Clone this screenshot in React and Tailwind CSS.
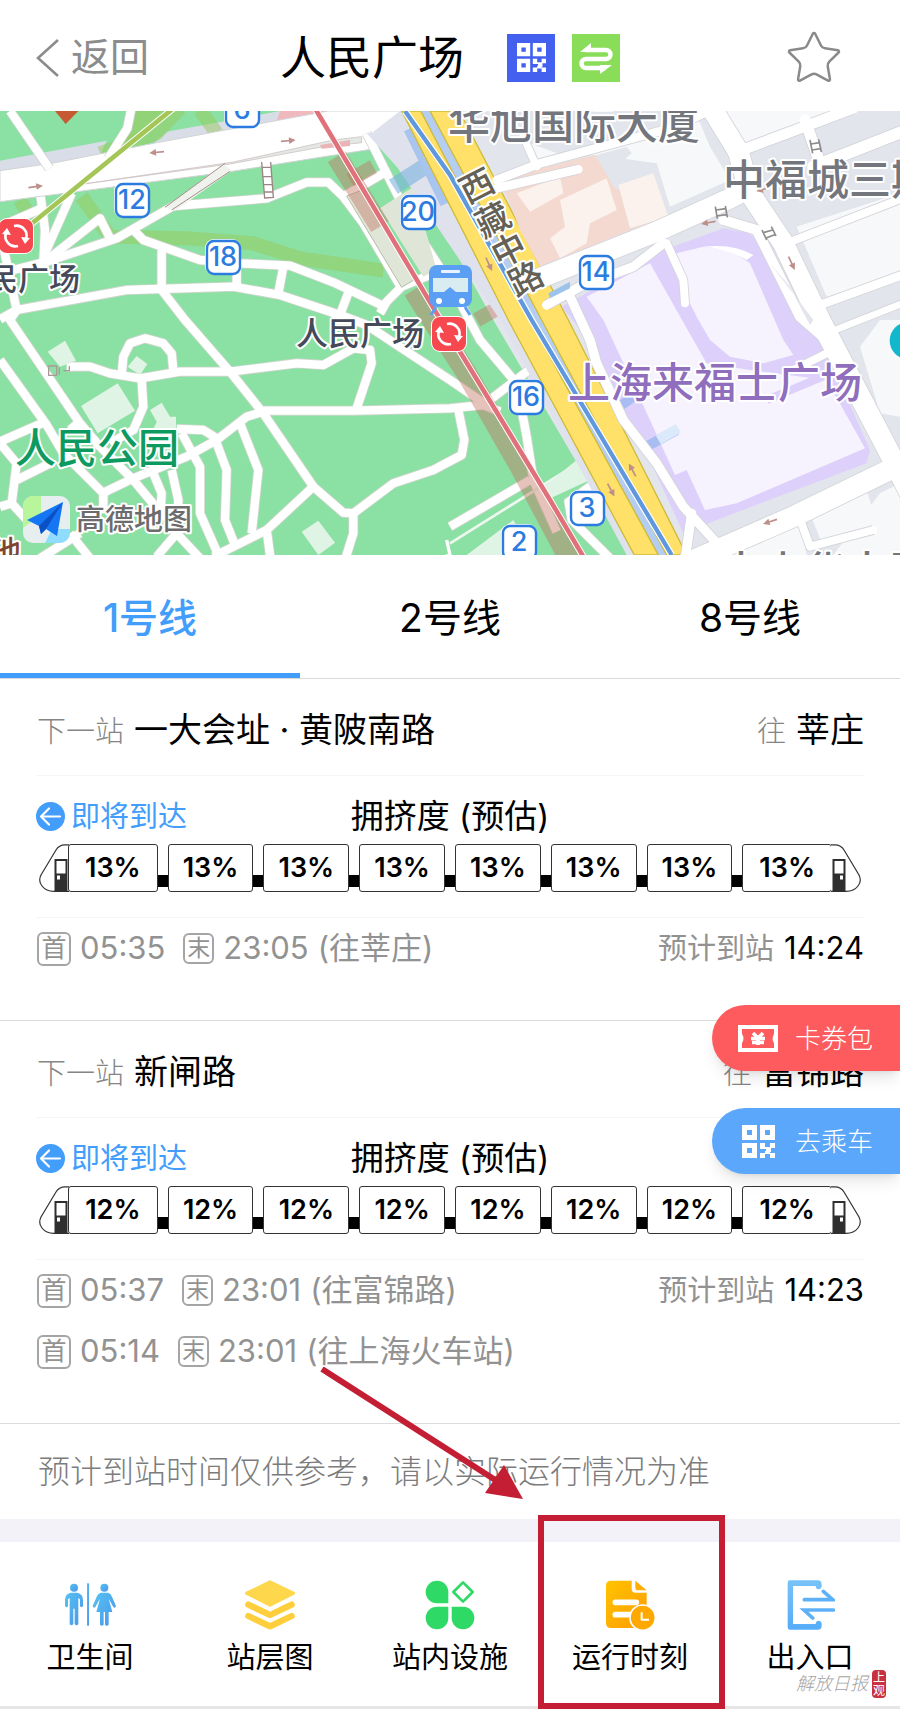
import React from "react";
import { Star } from "lucide-react";

const UI_FONT = "font-['Inter','Noto_Sans_CJK_SC',sans-serif]";

/* ---------- Map ---------- */

const PATHS = [
  "30,333 148,505",
  "395,320 382,385 325,475",
  "122,590 135,690 130,790",
  "215,580 135,760",
  "0,680 125,625",
  "130,795 160,765 300,655 335,725",
  "40,810 140,785 350,715 520,618 800,595 920,547 985,547 1030,590 1090,670 1205,865",
  "400,690 430,720 600,780 720,790 870,797 1000,847 1150,918",
  "485,750 485,870",
  "710,795 710,860",
  "850,800 835,880",
  "1050,865 1020,945",
  "0,958 50,930 380,870 700,860 840,885 1020,945 1100,975 1350,1140 1460,1215",
  "485,870 555,960 690,1115 790,1240 940,1460 1030,1538 1060,1540",
  "10,740 50,930 30,960 240,1270 300,1340 400,1440 475,1530",
  "0,1080 140,1275 190,1360 310,1480 310,1540",
  "200,1100 270,1100 330,1120 420,1135 540,1115 690,1115 890,1090 970,1095 1060,1045 1110,1050 1115,1090 1070,1225",
  "365,1125 370,1070 390,1030 435,1015 490,1030 515,1060 520,1110",
  "425,1140 430,1220 400,1290 330,1330",
  "790,1232 1060,1232 1350,1225 1450,1215 1500,1235",
  "790,1235 740,1250 650,1320 560,1370 400,1435 310,1478",
  "530,1287 610,1290 650,1315",
  "545,1300 600,1400 600,1540 655,1665",
  "650,1330 680,1410 675,1560 705,1635",
  "720,1270 775,1410 755,1600",
  "640,1670 800,1590 940,1460",
  "800,1590 812,1680",
  "515,1410 535,1500 530,1600 470,1670",
  "530,1600 600,1675",
  "460,1420 485,1480 480,1560",
  "1060,1540 1060,1600 1035,1680",
  "1060,1540 1180,1450 1300,1410 1385,1365 1393,1320 1375,1230",
  "0,1325 125,1270",
  "0,1330 50,1390 35,1510 0,1520",
  "50,1440 160,1385",
  "35,1510 90,1570",
  "210,1600 270,1675",
  "120,1675 240,1600",
  "210,1290 245,1260",
  "1100,400 1180,560 1240,680 1350,850 1440,1020 1550,1150 1580,1310 1600,1440 1670,1595",
  "1030,590 1150,520",
  "1140,940 1160,905 1205,860 1290,825",
  "1450,1215 1600,1100",
  "1350,1580 1590,1440",
  "1285,640 1370,600",
  "1700,1510 1790,1445",
  "1705,1500 1715,1560 1830,1675",
];

const EAST_ROADS = [
  [60, "1580,850 1970,695 2190,595 2260,560"],
  [62, "2120,300 2215,455 2250,580 2350,730 2460,960 2690,1400 2740,1500"],
  [32, "2200,460 2560,325"],
  [36, "2440,500 2720,390"],
  [24, "2360,730 2720,590"],
  [26, "2460,915 2720,820"],
  [20, "2480,1000 2720,905"],
  [34, "2415,360 2460,490"],
  [26, "1490,540 1620,490 2030,380 2110,340"],
  [22, "1570,410 1610,500"],
  [26, "1490,565 1735,508"],
  [28, "1640,915 1740,860 1900,800 1990,730"],
  [24, "2000,730 2050,840 2055,910"],
  [28, "1710,890 1770,1020 1790,1090 1870,1260 1970,1390 2050,1520 2160,1640"],
  [28, "2075,1540 2055,1680"],
  [62, "2060,1690 2380,1550 2740,1375"],
  [24, "2390,1530 2430,1640 2620,1590"],
  [30, "2480,1020 2400,950 2270,690 2170,660"],
  [24, "2500,1050 2380,1110"],
];

const ONE_WAY = [
  [470, 457, 175],
  [865, 422, -5],
  [107, 560, -8],
  [1467, 793, 65],
  [2125, 668, 170],
  [2290, 568, 165],
  [2375, 790, 65],
  [1833, 1470, 62],
  [1897, 1410, -118],
  [2310, 1565, 162],
];

const BADGES = [
  ["6", 242, 110],
  ["12", 132, 200],
  ["18", 223, 257],
  ["20", 418, 212],
  ["14", 596, 272],
  ["16", 526, 397],
  ["3", 587, 508],
  ["2", 519, 542],
];

const STREET = [
  ["西", 477, 186],
  ["藏", 493, 220],
  ["中", 509, 250],
  ["路", 526, 279],
];

function MetroMark({ x, y, r = 17 }) {
  return (
    <g transform={`translate(${x} ${y})`}>
      <rect x={-r - 1} y={-r - 1} width={2 * r + 2} height={2 * r + 2} rx="9" fill="#fff" />
      <rect x={-r} y={-r} width={2 * r} height={2 * r} rx="8" fill="#f8484f" />
      <g fill="none" stroke="#fff" strokeWidth="2.6">
        <path d="M-2 -10 A10 10 0 0 1 10 3" />
        <path d="M2 10 A10 10 0 0 1 -10 -3" />
      </g>
      <path d="M5 1 L14 2 L9 8 Z M-5 -1 L-14 -2 L-9 -8 Z" fill="#fff" />
    </g>
  );
}

function StationMap() {
  return (
    <svg viewBox="0 333 2700 1332" className="block w-full" role="img" aria-label="人民广场地图">
      <rect y="333" width="2700" height="1332" fill="#e3e5ec" />
      {/* park */}
      <path d="M0 333H1100L1215 460L1330 690L1480 960L1720 1370L1890 1665H0Z" fill="#8be0a3" />
      <path d="M1100 405L1190 425Q1225 440 1240 500L1390 740L1350 900Z" fill="#8be0a3" />
      <g fill="#d9dde7">
        <path d="M0 482L320 422L300 465L0 520Z" />
        <path d="M500 395L840 333H1010L640 410L450 440Z" />
      </g>
      <path d="M840 333H985L830 362Z" fill="#efb9bd" />
      <g fill="none" stroke="#98c95c" strokeOpacity=".5" strokeWidth="42">
        <path d="M60 600L90 650M245 590L330 710L560 715L760 730L900 775L1150 812" />
        <path d="M300 460L470 400L540 325M600 330L650 400" />
      </g>
      <path d="M400 333H520L300 520L330 460Z" fill="#98c95c" fillOpacity=".6" />
      <path d="M0 512L155 490L460 430L985 333H1220L1235 383L1105 407L1112 448L690 515L0 605Z" fill="#fff" stroke="#d2d3d6" strokeWidth="3" />
      <path d="M230 555L700 486L1000 420L1085 410V428L960 442L690 492Z" fill="#e4e8e4" stroke="#c9b8bb" strokeWidth="2" />
      <path d="M960 435L1050 420V438L965 446Z" fill="#eab4b6" />
      <path d="M165 333H235L197 372Z" fill="#c65a33" />

      {/* park paths */}
      <g fill="none" strokeLinejoin="round">
        {PATHS.map((p) => (
          <polyline key={p} points={p} stroke="#cfd6cd" strokeWidth="30" />
        ))}
        {PATHS.map((p) => (
          <polyline key={p} points={p} stroke="#fff" strokeWidth="25" />
        ))}
        <path d="M1350 1630L1750 1380" stroke="#eef7ef" strokeWidth="8" />
        <path d="M1340 1620L1350 1665L1300 1680" stroke="#fff" strokeWidth="10" />
      </g>
      <path d="M495 622L670 492L695 512L525 632Z" fill="#f0f2ee" />
      <path d="M495 622L675 490M515 630L690 514" stroke="#a88f8c" strokeWidth="3" />
      <g stroke="#9d8585" strokeWidth="4" fill="#fff">
        <path d="M785 486L794 594L820 592L812 486M788 502H812M790 530H814M792 554H816M794 576H818" />
      </g>
      <g fill="#dff4e4">
        <path d="M143 1055L195 1022L228 1082L180 1100Z" />
        <path d="M243 1218L353 1150L405 1232L293 1300Z" />
        <path d="M383 1100L410 1068L442 1092L420 1125Z" />
        <path d="M450 1230L485 1208L510 1250H528V1285L460 1288L470 1265Z" />
        <path d="M905 1595L955 1562L1005 1628L955 1665Z" />
        <path d="M1620 1470L1730 1380L1770 1440L1640 1500Z" />
        <path d="M1400 1665L1540 1560L1600 1665Z" />
      </g>
      <path d="M142 1098H170V1126H146V1102M178 1102V1124M190 1112H208V1098" fill="none" stroke="#a99" strokeWidth="4" />
      <path d="M1040 588L1082 572L1245 838L1205 862Z" fill="#dfe6d8" stroke="#b9bba7" strokeWidth="3" />
      <path d="M1140 625L1240 560L1310 810L1270 830Z" fill="#dfe6d8" />

      {/* passage under the metro line */}
      <g fill="none" stroke="#c0705c" strokeOpacity=".42">
        <path d="M1010 470L1140 680M1240 870L1290 950L1400 1120L1560 1400L1720 1700" strokeWidth="62" />
        <path d="M1050 540L1120 500M1430 960L1520 910" strokeWidth="44" />
      </g>

      {/* avenue */}
      <path d="M1120 395L1200 333H1290L1390 480L1720 1090L2060 1665H1880L1500 960Z" fill="#dfe2ec" />
      <path d="M1230 333H1330L1640 960L2020 1665H1960L1570 960Z" fill="#b5cdf0" />
      <path d="M1180 560L1290 490" stroke="#7cb3e0" strokeOpacity=".6" strokeWidth="50" />
      <path d="M1190 500L1100 400L1240 380L1260 470Z" fill="#dfe2ec" />
      <path d="M1230 385L1340 610" stroke="#a9c4ef" strokeWidth="40" />
      <g fill="#ffe068" stroke="#cdbb3a" strokeWidth="4">
        <path d="M1205 333H1262L1590 960L1975 1665H1903L1525 960Z" />
        <path d="M1290 333H1378L1705 960L2060 1665H2000L1625 960Z" />
      </g>
      <path d="M1215 333L1350 525L1595 960L2015 1665" fill="none" stroke="#fff" strokeWidth="20" />
      <path d="M1215 333L1350 525L1595 960L2015 1665" fill="none" stroke="#6098dd" strokeWidth="13" />

      {/* east blocks */}
      <g fill="#f7f8fa">
        <path d="M1590 430L1620 490L1690 465L2090 345L2130 440L2190 540L2010 620L1970 490L1860 530L1850 500L1895 460L1880 440L1790 465L1700 470Z" />
        <path d="M2160 333H2500L2225 433Z" />
        <path d="M2390 680L2700 580V820L2480 890Z" />
        <path d="M2580 1040L2640 960H2700V1250L2640 1240Z" />
        <path d="M2140 1665L2400 1560L2420 1665ZM2430 1540L2600 1470L2640 1600L2470 1640ZM2640 1480L2700 1450V1665H2500Z" />
      </g>
      <path d="M1500 535L1785 465L1830 540L2000 650L1890 690L1620 800L1560 690Z" fill="#f3d9cf" />
      <path d="M1790 465L1970 490L2005 650L1840 560Z" fill="#e3e5ec" />
      <g fill="#fbf1ed">
        <path d="M1550 580L1680 530L1690 580L1590 635Z" />
        <path d="M1680 600L1820 535L1850 630L1770 670L1760 730L1680 775L1650 715L1695 680Z" />
        <path d="M1855 555L1960 520L2005 650L1890 685Z" />
      </g>
      <path d="M1685 920L1990 750L2170 685L2250 700L2290 750L2410 950L2480 1055L2610 1350L2600 1390L2150 1560L2050 1600L1940 1360L1790 1110L1750 1000Z" fill="#ddd1fb" />
      <g fill="#f6f3fe">
        <path d="M1760 890L1950 790L2080 1020L2120 1090L2250 1110L2480 1140L2595 1345L2210 1510L2115 1530L2060 1410L2025 1425L1950 1260L1810 960Z" />
        <path d="M2030 760L2110 740L2190 750L2250 790L2350 1020L2380 1065L2290 1090L2190 1070L2130 1020L2090 950L2050 870Z" />
      </g>
      <path d="M2110 740Q2200 730 2260 765L2240 780Q2180 745 2110 740Z" fill="#fff" />
      <path d="M1865 1215L1900 1190M1930 1345L2030 1290" stroke="#a9bdf2" strokeWidth="30" />
      <path d="M1975 1320L2035 1285" stroke="#dbeafb" strokeWidth="30" />
      <path d="M2300 1200L2480 1125" stroke="#ddd1fb" strokeWidth="24" />
      <g fill="none" strokeLinejoin="round">
        {EAST_ROADS.map(([w, p]) => (
          <polyline key={p} points={p} stroke="#d3d4da" strokeWidth={w + 5} />
        ))}
        {EAST_ROADS.map(([w, p]) => (
          <polyline key={p} points={p} stroke="#fff" strokeWidth={w} strokeLinecap="round" />
        ))}
      </g>
      <path d="M2310 790L2440 960L2430 975L2370 860Z" fill="#e3e5ec" />
      <path d="M1645 880L1710 845V865L1650 895Z" fill="#9dc3ea" />
      <g fill="none" stroke="#8f8b8b" strokeWidth="5">
        <path d="M2430 420L2438 460M2456 418L2464 456M2433 432L2458 428M2436 450L2462 446" />
        <path d="M2146 620L2152 656M2176 618L2182 652M2148 630L2178 626M2150 648L2180 644" />
        <path d="M2286 690L2300 720M2314 680L2328 708M2290 698L2318 690M2298 714L2324 704" />
      </g>
      <g fill="none" stroke="#bd8f8b" strokeWidth="5">
        {ONE_WAY.map(([x, y, a]) => (
          <g key={`${x}-${y}`} transform={`translate(${x} ${y}) rotate(${a})`}>
            <path d="M-22 0H6" />
            <path d="M2 -10L22 0L2 10Z" fill="#bd8f8b" stroke="none" />
          </g>
        ))}
      </g>

      {/* metro lines */}
      <g fill="none">
        <path d="M520 325L90 675" stroke="#fff" strokeWidth="20" />
        <path d="M520 325L90 675" stroke="#a3c657" strokeWidth="14" />
        <path d="M945 325L1310 940L1380 1055L1650 1500L1750 1670" stroke="#fff" strokeWidth="20" />
        <path d="M945 325L1310 940L1380 1055L1650 1500L1750 1670" stroke="#e0717a" strokeWidth="14" />
      </g>
      <circle cx="2725" cy="1022" r="56" fill="#10b7cd" />

      {/* labels, in page units */}
      <g transform="scale(3)" fontFamily="Inter, 'Noto Sans CJK SC', sans-serif">
        <g>
          <rect x="429" y="265" width="43" height="42" rx="8" fill="#5b9ff5" />
          <path d="M436 307l-5 8M465 307l5 8" stroke="#5b9ff5" strokeWidth="3" />
          <rect x="441" y="270" width="19" height="3" rx="1" fill="#e9f3fd" />
          <path d="M433 278H468V292H456L450 287L444 292H433Z" fill="#d9ecf2" />
          <circle cx="439" cy="301" r="3" fill="#fff" />
          <circle cx="462" cy="301" r="3" fill="#fff" />
        </g>
        <MetroMark x={449} y={334} />
        <MetroMark x={16} y={236} />
        {BADGES.map(([n, x, y]) => (
          <g key={n}>
            <rect x={x - 18} y={y - 18} width="36" height="36" rx="9" fill="#fff" />
            <rect x={x - 16} y={y - 16} width="33" height="33" rx="7" fill="#fff" stroke="#2c7be0" strokeWidth="2.4" />
            <text x={x} y={y + 9} fontSize="27" fontWeight="500" fill="#2c7be0" textAnchor="middle">{n}</text>
          </g>
        ))}
        <g stroke="#fff" strokeWidth="4" strokeLinejoin="round" paintOrder="stroke" fontWeight="500">
          <text x="296" y="345" fontSize="32" fill="#444a5a">人民广场</text>
          <text x="80" y="290" fontSize="31" fill="#444a5a" textAnchor="end">人民广场</text>
          <g fontSize="42" fill="#74767d">
            <text x="448" y="139">华旭国际大厦</text>
            <text x="723" y="195">中福城三期</text>
            <text x="720" y="587">大中华大厦</text>
          </g>
          <text x="568" y="398" fontSize="42" fill="#8f6fbd">上海来福士广场</text>
          <text x="15" y="463" fontSize="41" fill="#0c9a61">人民公园</text>
          <text x="21" y="562" fontSize="30" fill="#7d4632" textAnchor="end">池</text>
          <text x="76" y="530" fontSize="29" fill="#6c6c6c">高德地图</text>
          {STREET.map(([c, x, y]) => (
            <text key={c} transform={`translate(${x} ${y}) rotate(-27)`} y="12" fontSize="34" fill="#646055" textAnchor="middle">{c}</text>
          ))}
        </g>
        <clipPath id="logo"><rect x="23" y="496" width="47" height="47" rx="10" /></clipPath>
        <g clipPath="url(#logo)">
          <rect x="23" y="496" width="47" height="47" fill="#e6eef0" />
          <path d="M23 496H41V515L23 528Z" fill="#b9f59a" />
          <path d="M45 543L52 529H70V543Z" fill="#8fdcff" />
        </g>
        <path d="M63 502L27 520L39 526L41 534L46 529L57 536Z" fill="#1476f2" />
        <path d="M63 502L39 526L41 534L46 529Z" fill="#0b50c4" />
      </g>
    </svg>
  );
}

/* ---------- Icons ---------- */

function QrIcon({ className }) {
  return (
    <svg viewBox="0 0 33 33" className={className} fill="currentColor" aria-hidden="true">
      <path fillRule="evenodd" d="M0 0h15v15H0zM5 5v5h5V5zM18 0h15v15H18zM23 5v5h5V5zM0 18h15v15H0zM5 23v5h5v-5z" />
      <path d="M18 18h5v4h5v-4h5v5h-4v4h-5v-3h-6zM18 28h5v5h-5zM23 26h5v3h-5zM28 28h5v5h-5z" />
    </svg>
  );
}

function SwapIcon() {
  return (
    <svg viewBox="0 0 48 48" className="size-12" aria-hidden="true">
      <g fill="none" stroke="#fff" strokeWidth="4.5" strokeLinejoin="round">
        <path d="M14 16H34a4.500 4.500 0 0 1 0 9H14a4.500 4.500 0 0 0 0 9H34" />
      </g>
      <path d="M8 18L19 9V18ZM40 31L28 40V31Z" fill="#fff" />
    </svg>
  );
}

function TicketIcon() {
  return (
    <svg viewBox="0 0 40 27" className="w-10" aria-hidden="true">
      <path fill="#fff" fillRule="evenodd" d="M0 0h40v27H0zM4 4v5q3 4 0 9v5h32v-5q-3-4 0-9V4z" />
      <path d="M15 8l5 5 5-5M13 13.500h14M14 17.500h12M20 12v8" fill="none" stroke="#fff" strokeWidth="3.600" />
    </svg>
  );
}

function ArrivingIcon() {
  return (
    <svg viewBox="0 0 29 29" className="size-[29px]" aria-hidden="true">
      <circle cx="14.500" cy="14.500" r="14.500" fill="#429dfb" />
      <path d="M24 14.500H5M13 6.500L5 14.500L13 22.500" fill="none" stroke="#fff" strokeWidth="2.200" strokeLinecap="round" strokeLinejoin="round" />
    </svg>
  );
}

function ToiletIcon() {
  return (
    <svg viewBox="192 242 158 150" className="h-[50px]" aria-hidden="true">
      <linearGradient id="wc" x2="1" y2="1"><stop stopColor="#55c3ee" /><stop offset="1" stopColor="#4b95ee" /></linearGradient>
      <g fill="url(#wc)">
        <circle cx="222" cy="265" r="12" />
        <path d="M212 280h20q17 4 17 22v18q-5 8-9 0v-20l-5-4v78q-5 8-11 0v-46h-4v46q-6 8-11 0v-78l-5 4v20q-4 8-9 0v-18q0-18 17-22z" />
        <rect x="261" y="252" width="6" height="127" />
        <circle cx="313" cy="265" r="12" />
        <path d="M302 280h22q8 2 12 12l12 28q-2 8-8 3l-14-25 11 40h-11v38q-5 6-11 0v-38h-4v38q-6 6-11 0v-38h-11l11-40-14 25q-6 5-8-3l12-28q5-10 12-12z" />
      </g>
    </svg>
  );
}

function LayersIcon() {
  return (
    <svg viewBox="0 0 150 150" className="size-[50px]" aria-hidden="true">
      <path d="M75 6L145 40L75 75L5 40Z" fill="#ffd74c" stroke="#ffd74c" strokeWidth="10" strokeLinejoin="round" />
      <g fill="none" stroke="#ffce3d" strokeWidth="19" strokeLinecap="round" strokeLinejoin="round">
        <path d="M10 74L75 105L140 74M10 108L75 139L140 108" />
      </g>
    </svg>
  );
}

function FacilitiesIcon() {
  return (
    <svg viewBox="0 0 150 150" className="size-[50px]" aria-hidden="true">
      <g fill="#2fd965">
        <path d="M70 70H36A34 34 0 1 1 70 36Z" />
        <path d="M70 80H36A34 34 0 1 0 70 114Z" />
        <path d="M80 80H114A34 34 0 1 1 80 114Z" />
      </g>
      <path d="M114 7L143 36L114 65L85 36Z" fill="none" stroke="#2fd965" strokeWidth="8" strokeLinejoin="round" />
    </svg>
  );
}

function TimetableIcon() {
  return (
    <svg viewBox="0 0 150 150" className="size-[50px]" aria-hidden="true">
      <linearGradient id="tt" x2="1" y2="1"><stop stopColor="#ffc400" /><stop offset="1" stopColor="#ff9a00" /></linearGradient>
      <path d="M18 2H80V26Q80 38 92 38H125V130Q125 144 111 144H18Q3 144 3 129V17Q3 2 18 2Z" fill="url(#tt)" />
      <path d="M91 2L125 31H98Q91 31 91 24Z" fill="#ffae00" />
      <path d="M31 67H94M31 104H80" stroke="#fff" strokeWidth="17" strokeLinecap="round" />
      <circle cx="113" cy="113" r="38" fill="#ffa800" stroke="#fff" strokeWidth="5" />
      <path d="M110 97V119H132" fill="none" stroke="#fff" strokeWidth="6" />
    </svg>
  );
}

function ExitIcon() {
  return (
    <svg viewBox="0 0 150 150" className="size-[50px]" aria-hidden="true">
      <linearGradient id="ex" x2="0" y2="1"><stop stopColor="#78c2f8" /><stop offset="1" stopColor="#55acf8" /></linearGradient>
      <path fill="url(#ex)" d="M14 1H98Q110 1 110 14V20Q109 27 101 28Q92 27 92 18H24V132H92Q92 123 101 122Q109 123 110 130V137Q110 149 98 149H14Q8 149 8 142V8Q8 1 14 1Z" />
      <g fill="none" stroke="#5fb1f7" strokeWidth="11" strokeLinecap="round">
        <path d="M58 59H143L115 34M145 90H57L83 114" />
      </g>
    </svg>
  );
}

function TrainNose({ flip }) {
  return (
    <svg viewBox="0 0 30 48" className={flip ? "-ml-px h-12 w-[30px] shrink-0 -scale-x-100" : "-mr-px h-12 w-[30px] shrink-0"} aria-hidden="true">
      <path d="M30 .8H26Q20 .8 17 6L2 31Q-1 37 3 42Q7 47.300 15 47.300H30" fill="#fff" stroke="#333" strokeWidth="1.200" />
      <path fillRule="evenodd" fill="#2f2f2f" d="M15.500 15h13v33h-13zM17.500 17v12.500h9V17zM18 31.500v4h3v-4z" />
    </svg>
  );
}

/* ---------- Sections ---------- */

function Train({ load }) {
  const cars = Array.from({ length: 8 }, (_, i) => i);
  return (
    <div className="mx-[3px] flex">
      <TrainNose />
      {cars.map((i) => (
        <React.Fragment key={i}>
          {i > 0 && <span className="mt-[31px] h-3 w-[10px] shrink-0 bg-black" />}
          <span
            className={`flex h-12 items-center justify-center rounded-[3px] border border-[#333] bg-white text-[27px] font-semibold text-black ${
              i === 0 || i === 7 ? "flex-[90_1_0%]" : "flex-[86_1_0%]"
            }`}
          >
            {load}
          </span>
        </React.Fragment>
      ))}
      <TrainNose flip />
    </div>
  );
}

function Direction({ next, to, load, times, eta }) {
  return (
    <section className="border-b border-[#dcdcdc] px-9 pb-[41px]">
      <div className="flex h-[97px] items-center justify-between border-b border-[#f5f5f5] pt-1 text-[34px] text-black">
        <h2 className="flex items-baseline gap-[10px]">
          <span className="pl-px text-[29px] font-light text-[#858585]">下一站</span>
          <span>{next}</span>
        </h2>
        <p className="flex items-baseline gap-[10px]">
          <span className="text-[29px] font-light text-[#858585]">往</span>
          <span>{to}</span>
        </p>
      </div>
      <div className="border-b border-[#f5f5f5] pt-4 pb-[25px]">
        <div className="mb-1 grid h-12 grid-cols-[1fr_auto_1fr] items-center">
          <p className="flex items-center gap-[6px] text-[29px] font-normal text-[#429dfb]">
            <ArrivingIcon />
            即将到达
          </p>
          <h3 className="text-[33px] text-black">拥挤度 (预估)</h3>
        </div>
        <Train load={load} />
      </div>
      <div className="flex justify-between">
        <ul>
          {times.map(([first, last, dest]) => (
            <li key={dest} className="flex h-[61px] items-center pl-px text-[31px] text-[#929292]">
              <span className="flex size-[34px] items-center justify-center rounded-md border-2 border-[#a5a5a5] text-[25px] leading-none">首</span>
              <span className="ml-[9px]">{first}</span>
              <span className="ml-[18px] flex size-[31px] items-center justify-center rounded-md border-2 border-[#a5a5a5] text-[23px] leading-none">末</span>
              <span className="ml-[9px]">{last}</span>
              <span className="ml-[9px]">({dest})</span>
            </li>
          ))}
        </ul>
        <p className="flex h-[61px] items-center gap-[10px] text-[29px] text-[#929292]">
          预计到站
          <span className="text-[31px] text-black">{eta}</span>
        </p>
      </div>
    </section>
  );
}

const LINES = ["1号线", "2号线", "8号线"];

const ACTIONS = [
  ["卫生间", ToiletIcon],
  ["站层图", LayersIcon],
  ["站内设施", FacilitiesIcon],
  ["运行时刻", TimetableIcon],
  ["出入口", ExitIcon],
];

export default function App() {
  return (
    <div className={`relative w-full overflow-hidden bg-white ${UI_FONT}`}>
      <header className="grid h-[111px] grid-cols-[1fr_auto_1fr] items-center px-9 pt-1">
        <a href="#back" className="flex items-center gap-[11px] text-[39px] text-[#8c8c8c]">
          <svg viewBox="0 0 24 38" className="h-[38px]" aria-hidden="true">
            <path d="M22 1L2 19L22 37" fill="none" stroke="#8c8c8c" strokeWidth="2.600" />
          </svg>
          返回
        </a>
        <div className="flex items-center">
          <h1 className="text-[46px] text-black">人民广场</h1>
          <button type="button" aria-label="乘车码" className="ml-[43px] flex size-12 items-center justify-center bg-[#4361ee] text-white">
            <QrIcon className="size-[29px]" />
          </button>
          <button type="button" aria-label="换乘" className="ml-[17px] size-12 bg-[#89dd58]">
            <SwapIcon />
          </button>
        </div>
        <button type="button" aria-label="收藏" className="mr-5 justify-self-end text-[#8a8a8a]">
          <Star size={60} strokeWidth={1} />
        </button>
      </header>

      <StationMap />

      <nav className="grid h-[124px] grid-cols-3 border-b border-[#d9d9d9]">
        {LINES.map((line, i) => (
          <button
            key={line}
            type="button"
            className={`border-b-[5px] pt-2 text-[39px] ${i === 0 ? "border-[#429dfb] font-medium text-[#429dfb]" : "border-transparent text-black"}`}
          >
            {line}
          </button>
        ))}
      </nav>

      <main>
        <Direction next="一大会址 · 黄陂南路" to="莘庄" load="13%" times={[["05:35", "23:05", "往莘庄"]]} eta="14:24" />
        <div className="relative">
          <Direction
            next="新闸路"
            to="富锦路"
            load="12%"
            times={[
              ["05:37", "23:01", "往富锦路"],
              ["05:14", "23:01", "往上海火车站"],
            ]}
            eta="14:23"
          />
          <div className="absolute -top-4 right-0 flex flex-col gap-[37px] text-[26px] font-light text-white">
            <button type="button" className="flex h-[66px] w-[188px] items-center gap-[17px] rounded-l-full bg-[#fd5b5d] pl-[26px] shadow-lg">
              <TicketIcon />
              卡券包
            </button>
            <button type="button" className="flex h-[66px] w-[188px] items-center gap-[17px] rounded-l-full bg-[#5aa7fb] pl-[26px] shadow-lg">
              <span className="flex w-10 justify-center">
                <QrIcon className="size-[33px]" />
              </span>
              去乘车
            </button>
          </div>
        </div>
        <div className="relative">
          <p className="flex h-[95px] items-center pl-[38px] text-[32px] font-light text-[#7c7c7c]">预计到站时间仅供参考，请以实际运行情况为准</p>
          <svg viewBox="0 0 204 134" className="absolute -top-[57px] left-[320px] w-[204px]" aria-hidden="true">
            <path d="M2 2L180 116" stroke="#c41e34" strokeWidth="6" />
            <path d="M203 132L165 126L184 98Z" fill="#c41e34" />
          </svg>
        </div>
      </main>

      <div className="h-[23px] bg-[#f3f2f8]" />

      <footer className="relative grid grid-cols-5 border-b-[3px] border-[#e6e6e6]">
        {ACTIONS.map(([label, Icon]) => (
          <button key={label} type="button" className="relative flex flex-col items-center gap-2 pt-[38px] pb-7 text-[29px] leading-10 text-black">
            <Icon />
            {label}
            {label === "运行时刻" && <span className="absolute -top-[27px] -right-[5px] -bottom-[3px] -left-[2px] border-6 border-[#c41e34]" />}
          </button>
        ))}
        <div className="absolute right-[14px] bottom-2 flex items-center gap-1">
          <span className="font-['Liberation_Serif','Noto_Sans_CJK_SC',serif] text-[18px] leading-none font-light text-[#a3a3a3] italic">解放日报</span>
          <span className="flex w-[14px] flex-col items-center rounded bg-[#c8313f] py-px text-[12px] leading-[13px] text-white">
            <span>上</span>
            <span>观</span>
          </span>
        </div>
      </footer>
    </div>
  );
}
